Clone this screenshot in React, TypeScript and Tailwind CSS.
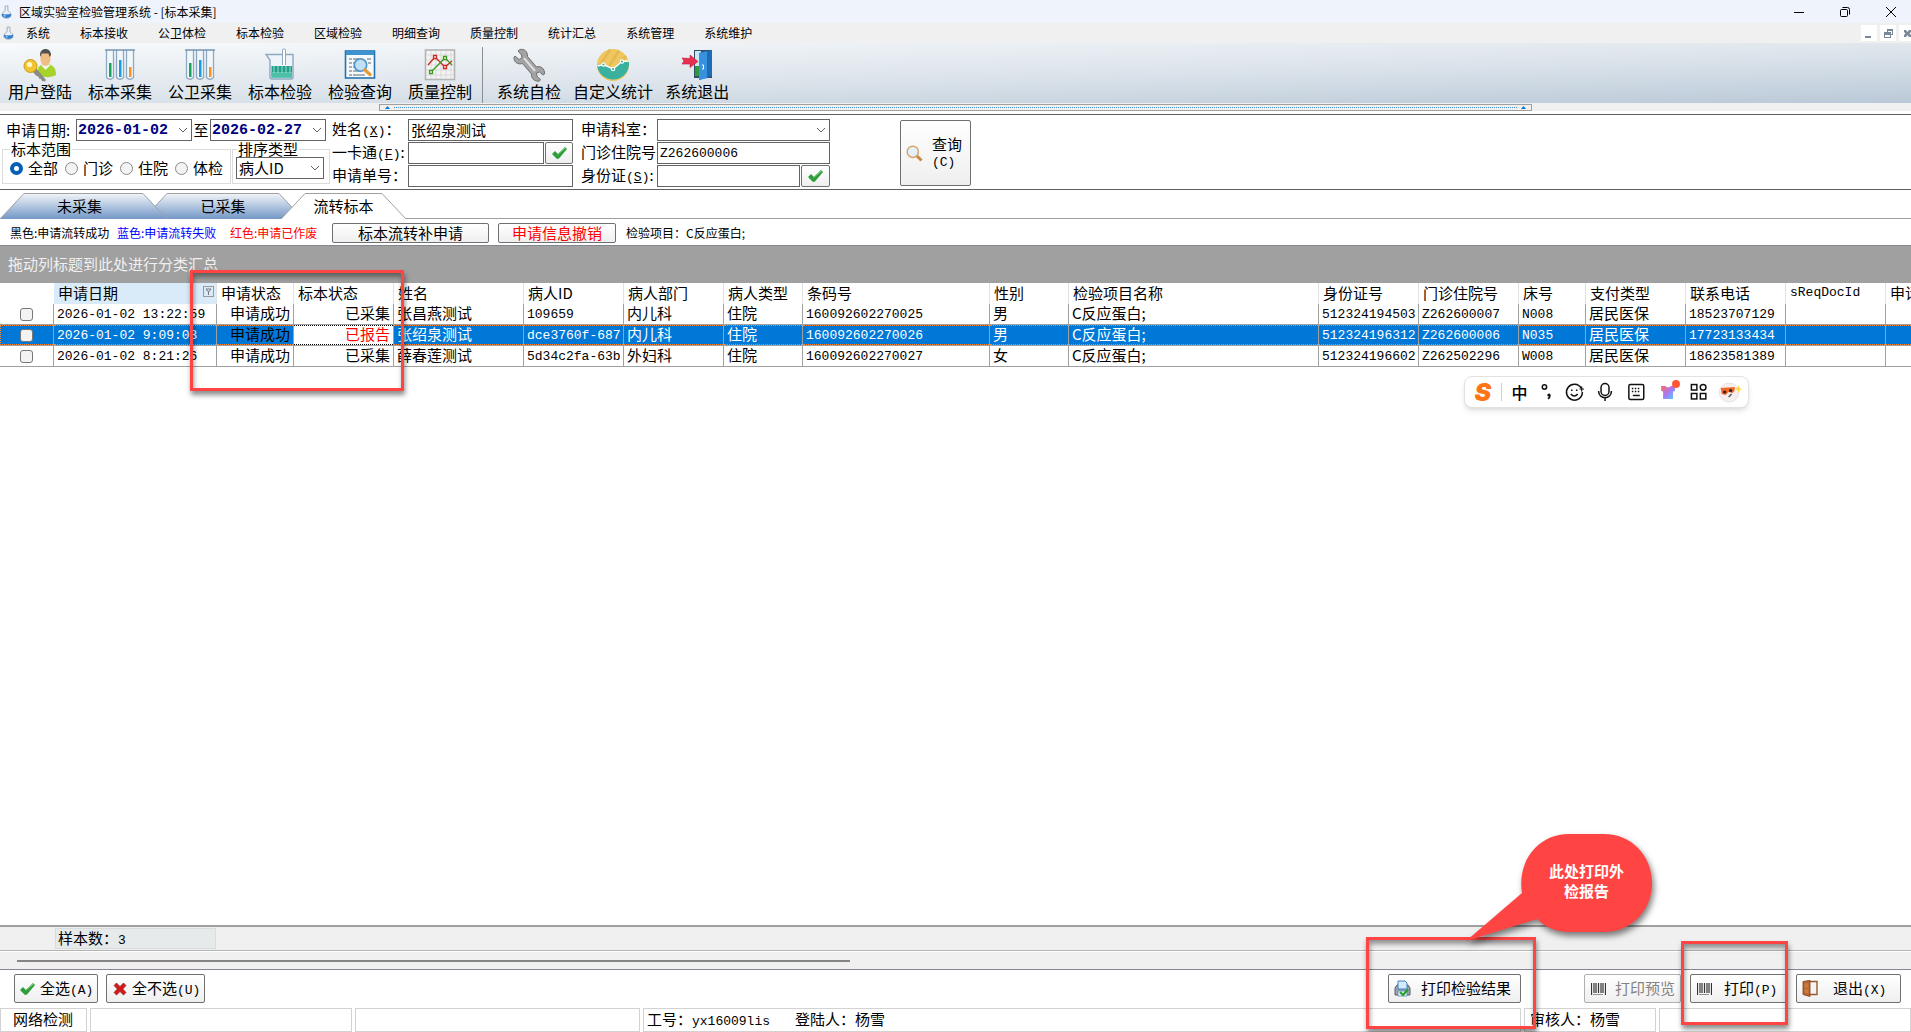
import { useState } from "react";
import type { ReactNode } from "react";
import clsx from "clsx";

type Row = {
  date: string;
  state: string;
  sample: string;
  name: string;
  pid: string;
  dept: string;
  kind: string;
  barcode: string;
  sex: string;
  item: string;
  idNo: string;
  visitNo: string;
  bed: string;
  pay: string;
  phone: string;
};

const ROWS: Row[] = [
  {
    date: "2026-01-02 13:22:59", state: "申请成功", sample: "已采集", name: "张昌燕测试", pid: "109659",
    dept: "内儿科", kind: "住院", barcode: "160092602270025", sex: "男", item: "C反应蛋白;",
    idNo: "512324194503", visitNo: "Z262600007", bed: "N008", pay: "居民医保", phone: "18523707129",
  },
  {
    date: "2026-01-02 9:09:03", state: "申请成功", sample: "已报告", name: "张绍泉测试", pid: "dce3760f-687",
    dept: "内儿科", kind: "住院", barcode: "160092602270026", sex: "男", item: "C反应蛋白;",
    idNo: "512324196312", visitNo: "Z262600006", bed: "N035", pay: "居民医保", phone: "17723133434",
  },
  {
    date: "2026-01-02 8:21:26", state: "申请成功", sample: "已采集", name: "薛春莲测试", pid: "5d34c2fa-63b",
    dept: "外妇科", kind: "住院", barcode: "160092602270027", sex: "女", item: "C反应蛋白;",
    idNo: "512324196602", visitNo: "Z262502296", bed: "W008", pay: "居民医保", phone: "18623581389",
  },
];

type Column = { title: string; width: string; field?: keyof Row; num?: boolean; right?: boolean };

const COLUMNS: Column[] = [
  { title: "申请日期", width: "w-[163px]", field: "date", num: true },
  { title: "申请状态", width: "w-[77px]", field: "state", right: true },
  { title: "标本状态", width: "w-[100px]", field: "sample", right: true },
  { title: "姓名", width: "w-[130px]", field: "name" },
  { title: "病人ID", width: "w-[100px]", field: "pid", num: true },
  { title: "病人部门", width: "w-[100px]", field: "dept" },
  { title: "病人类型", width: "w-[79px]", field: "kind" },
  { title: "条码号", width: "w-[187px]", field: "barcode", num: true },
  { title: "性别", width: "w-[79px]", field: "sex" },
  { title: "检验项目名称", width: "w-[250px]", field: "item" },
  { title: "身份证号", width: "w-[100px]", field: "idNo", num: true },
  { title: "门诊住院号", width: "w-[100px]", field: "visitNo", num: true },
  { title: "床号", width: "w-[67px]", field: "bed", num: true },
  { title: "支付类型", width: "w-[100px]", field: "pay" },
  { title: "联系电话", width: "w-[100px]", field: "phone", num: true },
  { title: "sReqDocId", width: "w-[100px]" },
  { title: "申请单号", width: "w-[100px]" },
];

const MENUS = ["系统", "标本接收", "公卫体检", "标本检验", "区域检验", "明细查询", "质量控制", "统计汇总", "系统管理", "系统维护"];

const NUM = "font-['Liberation_Mono','Noto_Sans_CJK_SC',monospace] text-[13px]";
const FIELD = "h-[22px] w-full border border-[#646464] bg-white px-[2px] outline-none";
const BUTTON = "flex items-center rounded-xs border border-[#707070] bg-linear-to-b from-white to-[#efefef]";

function FlaskIcon({ size }: { size: number }) {
  return (
    <svg width={size} height={size + 3} viewBox="0 0 12 15">
      <path d="M4.500 1h3v5C9.500 7.300 11 9 11 10.800 11 13 9 14.300 6 14.300s-5-1.300-5-3.500C1 9 2.500 7.300 4.500 6z" fill="#e9eff5" stroke="#9aa9b8" />
      <path d="M1.300 9.500c2 .8 7.400 .8 9.400 0 1 2.800-1.700 4.500-4.700 4.500s-5.700-1.700-4.700-4.500z" fill="#2f7fd0" />
      <circle cx="4" cy="11.500" r="1.200" fill="#8fc1f0" />
    </svg>
  );
}

function LoginIcon() {
  return (
    <svg width="34" height="34" viewBox="0 0 34 34">
      <path d="M14 26c0-7 3-10 9-10 7 0 10 4 10 11-5 3-14 3-19-1z" fill="#a6d42c" />
      <path d="M18 17l4.500 5 5-5-4.500-1z" fill="#f4f4ee" />
      <path d="M17.500 6c0-4 10-4 10 0v5c0 4-2.500 7-5 7s-5-3-5-7z" fill="#f0bd85" />
      <path d="M17 7c0-8 11-8 11 0l-1.500 2-1-3.500h-7L18 9z" fill="#515151" />
      <path d="M13 20l10 12-1 1.500-3-.5-1-2-2-.5-.5-2-2-.5L9 23z" fill="#8a8a86" />
      <circle cx="7.500" cy="18" r="6.500" fill="#f2c42e" stroke="#c99b17" />
      <circle cx="6.500" cy="16.500" r="2.600" fill="#fff6d0" />
    </svg>
  );
}

function TubesIcon() {
  return (
    <svg width="32" height="34" viewBox="0 0 32 34">
      {[
        { x: 3, y: 15, c: "#16a35a" },
        { x: 13, y: 12, c: "#1c9be0" },
        { x: 23, y: 19, c: "#f7941d" },
      ].map((t) => (
        <g key={t.x}>
          <path d={`M${t.x - 0.5} 2v27.500q3.500 3.500 7 0V2`} fill="#f1f6fb" stroke="#8fa9c2" strokeWidth="1.300" />
          <path d={`M${t.x - 2} 2h10`} stroke="#7d9ab6" strokeWidth="1.600" />
          <rect x={t.x + 2} y={t.y} width="2.500" height={29 - t.y} fill={t.c} />
        </g>
      ))}
    </svg>
  );
}

function BeakerIcon() {
  return (
    <svg width="32" height="34" viewBox="0 0 32 34">
      <path d="M2 6.500h27V29q0 2-2 2H8q-2 0-2-2V12z" fill="#eef4f9" stroke="#8fa9c2" strokeWidth="1.400" />
      <path d="M7.500 18H28v11.500H7.500z" fill="#1fa08a" />
      <path d="M7.500 24H28v5.500H7.500z" fill="#4cc0a8" />
      <path d="M10 18v7M14 18v7M18 18v7M22 18v7M26 18v7" stroke="#d7f0ea" strokeWidth=".7" />
      <path d="M18.500 17V1.500q1.500-1.500 3 0V17" fill="#fff" stroke="#8fa9c2" />
    </svg>
  );
}

function QueryIcon() {
  return (
    <svg width="32" height="34" viewBox="0 0 32 34">
      <rect x="1.500" y="3" width="29" height="27" fill="#f6f9fc" stroke="#2373ae" strokeWidth="1.600" />
      <rect x="2" y="3" width="28" height="4" fill="#3b93d0" />
      <path d="M5 11h3M5 15h3M5 19h3M5 23h3M5 27h3M9 11h6M23 11h4M9 15h3M9 19h3M9 23h8M9 27h12M24 15h3" stroke="#5d6873" />
      <circle cx="16.500" cy="17" r="6.200" fill="#bfe0f5" stroke="#4c93c9" strokeWidth="1.600" />
      <path d="M21 22l5 4.500" stroke="#e99a35" strokeWidth="3.400" strokeLinecap="round" />
    </svg>
  );
}

function QualityIcon() {
  return (
    <svg width="32" height="34" viewBox="0 0 32 34">
      <rect x="1.500" y="2" width="29" height="29.500" fill="#f3f3f3" stroke="#b4b4b4" strokeWidth="1.600" />
      <path d="M7 3v28M12 3v28M17 3v28M22 3v28M27 3v28M2 7h28M2 12h28M2 17h28M2 22h28M2 27h28" stroke="#d4d4d4" strokeWidth=".8" />
      <path d="M4 17l7-8 10 10 7-6" fill="none" stroke="#cc2a22" strokeWidth="1.300" />
      <path d="M7 24L21 10l7 7" fill="none" stroke="#3a9a1e" strokeWidth="1.300" />
      <g fill="#fff" strokeWidth="1.300">
        <path d="M9.500 7.500h3v3h-3zM19.500 17.500h3v3h-3z" stroke="#cc2a22" />
        <path d="M5.500 22.500h3v3h-3zM19.500 8.500h3v3h-3z" stroke="#3a9a1e" />
      </g>
    </svg>
  );
}

function WrenchIcon() {
  return (
    <svg width="34" height="34" viewBox="0 0 34 34">
      <path
        d="M8 1.500c4-1 8 2 7.500 7l9 10.500c4-1.500 8.500 1.500 8 7l-1.500 1-3.500-3-3 1 .5 3.500 3.500 3-1 1.500c-4 1-8.500-2-8-7l-9-10.500C6 17 1.500 14 2 9.500L3 8l4 3.500 3-1.500-.5-3L6 3z"
        fill="#a3a3a3"
        stroke="#6f6f6f"
      />
      <path d="M12 10l11 13" stroke="#dedede" strokeWidth="2" />
    </svg>
  );
}

function StatIcon() {
  return (
    <svg width="34" height="34" viewBox="0 0 34 34">
      <circle cx="17" cy="17" r="16" fill="#efc75e" />
      <path d="M14 1.500L3 19M23 2.500L12 20M30 8L21 18" stroke="#e4b951" strokeWidth="2.500" />
      <path d="M1 17l6.500-1L17 20.500 26 13.500l7 .5a16 16 0 0 1-32 3z" fill="#3ab09e" />
      <path d="M1.500 18L7.500 16.500 17 21l9-7.500 6.500-.5" fill="none" stroke="#fff" strokeWidth="1.400" />
      <circle cx="7.500" cy="16.500" r="1.700" fill="#3ab09e" stroke="#fff" strokeWidth="1.200" />
      <circle cx="17" cy="21" r="1.700" fill="#3ab09e" stroke="#fff" strokeWidth="1.200" />
      <circle cx="26" cy="13.500" r="1.700" fill="#3ab09e" stroke="#fff" strokeWidth="1.200" />
    </svg>
  );
}

function ExitIcon() {
  return (
    <svg width="34" height="34" viewBox="0 0 34 34">
      <path d="M14 2h18v28H14z" fill="#2f4f6b" />
      <path d="M15 3h6v25h-6z" fill="#c9e8f7" />
      <path d="M15 18h6v10h-6z" fill="#2f9a3c" />
      <path d="M19 5l13-3v26l-13 4z" fill="#1d6cb8" />
      <path d="M19 5l8-1.800v27L19 32z" fill="#3791de" />
      <path d="M22 17h1.500v4H22" fill="none" stroke="#fff" />
      <path d="M2 10l8 .5V7l8 6.500-8 6V16H2l2-3z" fill="#e5304f" stroke="#c21c3c" strokeWidth=".6" />
    </svg>
  );
}

function CheckIcon() {
  return (
    <svg width="17" height="14" viewBox="0 0 17 14" aria-hidden>
      <path d="M1 8l3-3 3 3L14 1l2 2L8 12.500 6 13z" fill="#2f9e3a" />
      <path d="M6.500 9L15 2l-1-.8L6.500 8z" fill="#7ecb85" />
    </svg>
  );
}

function CrossIcon() {
  return (
    <svg width="14" height="14" viewBox="0 0 14 14" aria-hidden>
      <path d="M3.500 1L7 4.500 10.500 1 13 3.500 9.800 7 13 10.500 10.500 13 7 9.600 3.500 13 1 10.500 4.300 7 1 3.500z" fill="#d11a1a" stroke="#8e1111" strokeWidth=".6" />
    </svg>
  );
}

function MagnifierIcon() {
  return (
    <svg width="17" height="17" viewBox="0 0 17 17" aria-hidden>
      <path d="M10.500 10.500l5 5" stroke="#c58b45" strokeWidth="3" />
      <circle cx="6.800" cy="6.800" r="5.600" fill="#e3f1fc" stroke="#d9a566" strokeWidth="1.500" />
    </svg>
  );
}

function PrinterIcon() {
  return (
    <svg width="17" height="17" viewBox="0 0 17 17" aria-hidden>
      <path d="M1 8l2-3h11l2 3v7H1z" fill="#9aa3ad" stroke="#59636e" />
      <path d="M4 1h7l2 2v6H4z" fill="#d6eafc" stroke="#3d84c6" />
      <path d="M4 11h9v5H4z" fill="#eef6fd" stroke="#5b86b0" strokeWidth=".8" />
      <path d="M6 12l3 3 5-5.500" fill="none" stroke="#23a127" strokeWidth="2.200" />
    </svg>
  );
}

function BarcodeIcon() {
  return (
    <svg width="15" height="14" viewBox="0 0 15 14" aria-hidden>
      <path d="M.500 1v12M3 1v10M5 1v10M7.500 1v10M10 1v10M12 1v10M14.500 1v12" stroke="#333" strokeWidth="1.200" />
      <path d="M2.500 12.500h10" stroke="#333" strokeDasharray="1 1" />
    </svg>
  );
}

function DoorIcon() {
  return (
    <svg width="16" height="17" viewBox="0 0 16 17" aria-hidden>
      <path d="M5 1.500h10v13H5z" fill="#f3f3f3" stroke="#9b5a2e" strokeWidth="1.400" />
      <path d="M1 1.500l7-1v16l-7-2z" fill="#b8672f" stroke="#7c4019" strokeWidth=".8" />
      <path d="M2.500 3.500l4-.5v4.500l-4 .3zM2.500 9.300l4-.2v4.400l-4-.8z" fill="#c97b40" />
    </svg>
  );
}

function Chevron() {
  return (
    <svg width="10" height="6" viewBox="0 0 10 6" className="pointer-events-none absolute right-1 top-2" aria-hidden>
      <path d="M1 1l4 4 4-4" fill="none" stroke="#606060" />
    </svg>
  );
}

const TOOLS: { label: string; icon: ReactNode }[] = [
  { label: "用户登陆", icon: <LoginIcon /> },
  { label: "标本采集", icon: <TubesIcon /> },
  { label: "公卫采集", icon: <TubesIcon /> },
  { label: "标本检验", icon: <BeakerIcon /> },
  { label: "检验查询", icon: <QueryIcon /> },
  { label: "质量控制", icon: <QualityIcon /> },
];

const SYSTEM_TOOLS: { label: string; icon: ReactNode }[] = [
  { label: "系统自检", icon: <WrenchIcon /> },
  { label: "自定义统计", icon: <StatIcon /> },
  { label: "系统退出", icon: <ExitIcon /> },
];

function TitleBar() {
  return (
    <header className="flex h-[23px] shrink-0 items-center bg-[#eff3fb] pl-px text-xs">
      <FlaskIcon size={11} />
      <h1 className="ml-[7px] flex-1">区域实验室检验管理系统 - [标本采集]</h1>
      <div className="flex items-center gap-[34px] pr-[14px]">
        <button type="button" aria-label="最小化">
          <svg width="12" height="12" viewBox="0 0 12 12"><path d="M1 6.500h10" stroke="#000" /></svg>
        </button>
        <button type="button" aria-label="还原">
          <svg width="12" height="12" viewBox="0 0 12 12" fill="none" stroke="#000">
            <rect x="1.500" y="3.500" width="7" height="7" rx="1" />
            <path d="M3.500 1.500h5q2 0 2 2v5" />
          </svg>
        </button>
        <button type="button" aria-label="关闭">
          <svg width="12" height="12" viewBox="0 0 12 12"><path d="M1 1l10 10M11 1L1 11" stroke="#000" /></svg>
        </button>
      </div>
    </header>
  );
}

const CHILD_BUTTONS = [
  { label: "最小化子窗口", d: "M4 11h6v2H4z" },
  { label: "还原子窗口", d: "M7 4h6v6h-2V9h1V6H8v1H7zM4 7h7v6H4zm1 3v2h5v-2z" },
  { label: "关闭子窗口", d: "M5 5h2l1.500 2L10 5h2v2l-1.500 1.500L12 10v2h-2l-1.500-2L7 12H5v-2l1.500-1.500L5 7z" },
];

function MenuBar() {
  return (
    <nav className="flex h-5 shrink-0 items-center overflow-hidden bg-[#f0f0f0] pl-[3px] text-xs">
      <FlaskIcon size={11} />
      <div className="ml-3 flex flex-1 gap-[30px]">
        {MENUS.map((m) => (
          <button key={m} type="button" className="leading-[18px]">
            {m}
          </button>
        ))}
      </div>
      <div className="-mr-1 flex gap-[3px]">
        {CHILD_BUTTONS.map((b) => (
          <button key={b.label} type="button" aria-label={b.label} className="bg-white">
            <svg width="16" height="16" viewBox="0 0 16 16">
              <path d={b.d} fill="#7a8797" fillRule="evenodd" />
            </svg>
          </button>
        ))}
      </div>
    </nav>
  );
}

function ToolButton({ label, icon }: { label: string; icon: ReactNode }) {
  return (
    <button type="button" className="flex flex-col items-center pt-[5px]">
      {icon}
      <span className="text-base leading-[18px]">{label}</span>
    </button>
  );
}

function ToolBar() {
  return (
    <div className="flex h-[60px] shrink-0 bg-[linear-gradient(178.5deg,#f8fafc,#dbe3ea_55%,#bac9d8)] pl-2">
      <div className="flex gap-4">
        {TOOLS.map((t) => (
          <ToolButton key={t.label} label={t.label} icon={t.icon} />
        ))}
      </div>
      <div className="ml-[10px] mt-1 border-l border-[#8a8f94]" />
      <div className="ml-[14px] flex gap-3">
        {SYSTEM_TOOLS.map((t) => (
          <ToolButton key={t.label} label={t.label} icon={t.icon} />
        ))}
      </div>
    </div>
  );
}

function Splitter() {
  return (
    <div className="h-[11px] shrink-0 bg-white">
      <div className="h-2 bg-[#f0f0f0] pt-px">
        <div className="mx-auto flex h-[7px] w-[60.3%] items-center gap-1 border border-[#a0a0a0] px-[5px]">
          <svg width="5" height="3" viewBox="0 0 5 3"><path d="M0 3l2.500-3L5 3z" fill="#0078d7" /></svg>
          <span className="flex-1 border-t border-dotted border-[#3b8fd0]" />
          <svg width="5" height="3" viewBox="0 0 5 3"><path d="M0 3l2.500-3L5 3z" fill="#0078d7" /></svg>
        </div>
      </div>
    </div>
  );
}

function DateField({ id, value, label }: { id: string; value: string; label: string }) {
  const [v, setV] = useState(value);
  return (
    <div className="relative">
      <input
        id={id}
        aria-label={label}
        value={v}
        onChange={(e) => setV(e.target.value)}
        className="block h-[22px] w-[116px] border border-[#646464] bg-white px-px font-['Liberation_Mono',monospace] text-[15px] font-bold text-[#000080] outline-none"
      />
      <Chevron />
    </div>
  );
}

function Hot({ k }: { k: string }) {
  return (
    <span className={NUM}>
      (<u>{k}</u>)
    </span>
  );
}

function FilterPanel() {
  const [scope, setScope] = useState("全部");
  return (
    <form
      onSubmit={(e) => e.preventDefault()}
      className="flex h-[76px] shrink-0 border-y border-[#606060] bg-white pt-1 leading-5"
    >
      <div className="flex w-[330px] shrink-0 flex-col">
        <div className="flex items-center pl-1.5">
          <label htmlFor="from" className="w-[70px] whitespace-nowrap">申请日期:</label>
          <DateField id="from" label="开始日期" value="2026-01-02" />
          <label htmlFor="to" className="w-[18px] text-center">至</label>
          <DateField id="to" label="结束日期" value="2026-02-27" />
        </div>
        <div className="flex gap-px pl-[2px]">
          <fieldset className="h-[43px] w-[226px] border border-[#dcdcdc] pl-[7px]">
            <legend className="px-px leading-4">标本范围</legend>
            <div className="flex">
              {["全部", "门诊", "住院", "体检"].map((s) => (
                <label key={s} className="flex w-[55px] items-center gap-[5px] whitespace-nowrap leading-[22px]">
                  <input
                    type="radio"
                    name="scope"
                    checked={scope === s}
                    onChange={() => setScope(s)}
                    className="size-[13px] shrink-0 appearance-none rounded-full border border-[#8a8a8a] bg-[#f3f3f3] checked:border-4 checked:border-[#0560b6] checked:bg-white"
                  />
                  {s}
                </label>
              ))}
            </div>
          </fieldset>
          <fieldset className="h-[43px] w-[98px] border border-[#dcdcdc] pl-[3px]">
            <legend className="ml-px px-px leading-4">排序类型</legend>
            <div className="relative w-[88px]">
              <select aria-label="排序类型" className="block h-[22px] w-full appearance-none border border-[#646464] bg-white pl-[2px] leading-[18px] outline-none">
                <option>病人ID</option>
              </select>
              <Chevron />
            </div>
          </fieldset>
        </div>
      </div>

      <div className="grid shrink-0 auto-rows-[22px] grid-cols-[76px_165px] content-start gap-y-px whitespace-nowrap pl-[2px]">
        <label htmlFor="pname">姓名<Hot k="X" />：</label>
        <input id="pname" defaultValue="张绍泉测试" className={clsx(FIELD, "pb-[2px]")} />
        <label htmlFor="card">一卡通<Hot k="F" />:</label>
        <div className="flex gap-px">
          <input id="card" className={FIELD} />
          <button type="button" aria-label="读取一卡通" className={clsx(BUTTON, "w-7 shrink-0 justify-center")}>
            <CheckIcon />
          </button>
        </div>
        <label htmlFor="reqno">申请单号：</label>
        <input id="reqno" className={FIELD} />
      </div>

      <div className="grid shrink-0 auto-rows-[22px] grid-cols-[76px_173px] content-start gap-y-px whitespace-nowrap pl-2">
        <label htmlFor="dept">申请科室：</label>
        <div className="relative">
          <select id="dept" className={clsx(FIELD, "block appearance-none")} />
          <Chevron />
        </div>
        <label htmlFor="visit">门诊住院号</label>
        <input id="visit" defaultValue="Z262600006" className={clsx(FIELD, NUM)} />
        <label htmlFor="idno">身份证<Hot k="S" />:</label>
        <div className="flex gap-px">
          <input id="idno" className={FIELD} />
          <button type="button" aria-label="读取身份证" className={clsx(BUTTON, "w-[29px] shrink-0 justify-center")}>
            <CheckIcon />
          </button>
        </div>
      </div>

      <button type="submit" className={clsx(BUTTON, "ml-[70px] mt-px h-[66px] w-[71px] shrink-0 gap-[9px] pl-[5px] leading-4")}>
        <MagnifierIcon />
        <span className="text-left">
          查询
          <br />
          <span className={NUM}>(C)</span>
        </span>
      </button>
    </form>
  );
}

function Tabs() {
  const [active, setActive] = useState("流转标本");
  const tabs = [
    { name: "未采集", cls: "w-[167px] z-10 pr-2", w: 167 },
    { name: "已采集", cls: "w-[160px] -ml-6", w: 160 },
    { name: "流转标本", cls: "w-[125px] -ml-[22px] z-20", w: 125 },
  ];
  return (
    <div role="tablist" className="flex h-[29px] shrink-0 border-b border-[#a0a0a0] bg-white pt-[3px]">
      {tabs.map((t) => {
        const on = t.name === active;
        return (
          <button
            key={t.name}
            type="button"
            role="tab"
            aria-selected={on}
            onClick={() => setActive(t.name)}
            className={clsx("relative h-[26px] leading-[26px]", t.cls)}
          >
            <svg className="absolute inset-0" width={t.w} height="26" viewBox={`0 0 ${t.w} 26`} aria-hidden>
              <defs>
                <linearGradient id="tabFill" x1="0" y1="0" x2="0" y2="1">
                  <stop offset="0" stopColor="#f1f5f9" />
                  <stop offset="1" stopColor="#7397c6" />
                </linearGradient>
              </defs>
              <path
                d={`M0 26L24 .500H${t.w - 24}L${t.w} 26`}
                fill={on ? "#fff" : "url(#tabFill)"}
                stroke="#a0a0a0"
              />
            </svg>
            <span className="relative">{t.name}</span>
          </button>
        );
      })}
    </div>
  );
}

function LegendBar() {
  return (
    <div className="flex h-[26px] shrink-0 items-center bg-white pl-[10px] pt-px text-xs">
      <span className="w-[107px] whitespace-nowrap">黑色:申请流转成功</span>
      <span className="w-[113px] whitespace-nowrap text-[#0000ff]">蓝色:申请流转失败</span>
      <span className="w-[102px] whitespace-nowrap text-[#ff0000]">红色:申请已作废</span>
      <button type="button" className={clsx(BUTTON, "h-5 w-[157px] justify-center text-[15px] leading-4")}>标本流转补申请</button>
      <button type="button" className={clsx(BUTTON, "ml-[9px] h-5 w-[118px] justify-center text-[15px] leading-4 text-[#ff0000]")}>申请信息撤销</button>
      <span className="ml-[10px]">检验项目：C反应蛋白;</span>
    </div>
  );
}

function SampleGrid() {
  const [picked, setPicked] = useState<string[]>([]);
  const [current, setCurrent] = useState(ROWS[1].barcode);

  function toggle(code: string) {
    setPicked((p) => (p.includes(code) ? p.filter((x) => x !== code) : [...p, code]));
  }

  return (
    <div className="relative min-h-0 flex-1 overflow-hidden bg-white">
      <p className="h-[38px] border-t border-[#828790] bg-[#a0a0a0] pl-2 leading-9 text-[#f0f0f0]">
        拖动列标题到此处进行分类汇总
      </p>
      <table className="w-[1986px] table-fixed border-separate border-spacing-0 whitespace-nowrap text-left">
        <thead>
          <tr className="h-[21px]">
            <th className="w-[54px]" aria-label="选择" />
            {COLUMNS.map((c, i) => (
              <th
                key={c.title}
                className={clsx(
                  "relative border-r border-[#e2e2e2] pb-[2px] pl-1 font-normal leading-[19px]",
                  c.width,
                  i === 0 && "bg-[#d9ebf9]",
                  c.title === "sReqDocId" && NUM,
                )}
              >
                {c.title}
                {i === 0 && (
                  <svg width="11" height="11" viewBox="0 0 11 11" className="absolute right-[2px] top-[3px]" aria-hidden>
                    <rect x=".5" y=".5" width="10" height="10" fill="none" stroke="#9a9a9a" />
                    <path d="M3 3h5L5.500 6zM5.500 5v4" fill="none" stroke="#777" />
                  </svg>
                )}
              </th>
            ))}
          </tr>
        </thead>
        <tbody>
          {ROWS.map((r) => {
            const on = r.barcode === current;
            return (
              <tr key={r.barcode} onClick={() => setCurrent(r.barcode)} className={clsx("h-[21px]", on && "bg-[#0078d7] text-white")}>
                <td className="relative border-b border-r border-[#a0a0a0] p-0">
                  <input
                    type="checkbox"
                    aria-label={`选择 ${r.name}`}
                    checked={picked.includes(r.barcode)}
                    onChange={() => toggle(r.barcode)}
                    className="mx-auto block size-[13px] appearance-none rounded-[3px] border border-[#777] bg-[#f3f3f3] checked:bg-[#0560b6]"
                  />
                  {on && <span className="pointer-events-none absolute inset-0 border-y border-l border-dotted border-[#ff8728]" />}
                </td>
                {COLUMNS.map((c) => (
                  <td
                    key={c.title}
                    className={clsx(
                      "relative overflow-hidden border-b border-r border-[#a0a0a0] px-[3px] leading-[18px]",
                      c.num ? "pb-0 pt-[2px]" : "pb-[2px] pt-0",
                      c.num && NUM,
                      c.right && "text-right",
                      on && c.field === "state" && "text-black",
                      on && c.field === "sample" && "bg-white text-[#ff0000]",
                    )}
                  >
                    {c.field ? r[c.field] : ""}
                    {on && (
                      <span
                        className={clsx(
                          "absolute inset-0 border-y border-dotted",
                          c.field === "sample" ? "border-black" : "border-[#ff8728]",
                        )}
                      />
                    )}
                  </td>
                ))}
              </tr>
            );
          })}
        </tbody>
      </table>

      <div className="pointer-events-none absolute left-[190px] top-[25px] h-[121px] w-[214px] border-[3px] border-[#ff4444] shadow-[1px_4px_5px_rgba(0,0,0,0.45),inset_1px_4px_5px_rgba(0,0,0,0.4)]" />
    </div>
  );
}

function ImeBar() {
  return (
    <div className="absolute right-[162px] top-[376px] flex h-8 w-[285px] items-center rounded-lg border border-[#e2e2e2] bg-white shadow-md">
      <span className="w-9 text-center font-['Inter',sans-serif] text-[25px] leading-8 font-black text-[#ff7416] italic">S</span>
      <span className="h-[18px] border-l border-[#cfcfcf]" />
      <span className="w-9 text-center text-base leading-7 font-medium">中</span>
      <svg width="212" height="24" viewBox="0 0 212 24" fill="none" stroke="#111" strokeWidth="1.500" aria-hidden>
        <circle cx="6.500" cy="7" r="2.200" />
        <circle cx="11" cy="15" r="1.600" fill="#111" stroke="none" />
        <path d="M12 15q.3 2.500-2 4" />
        <path d="M43.500 8a8 8 0 1 0 1.200 4" />
        <path d="M33 14q3.500 4 7 0M34 9.500v1.500M39 9.500v1.500" />
        <path d="M44 6.500v5M41.800 9h4.600" strokeWidth="1.200" />
        <rect x="63.500" y="3.500" width="8" height="12" rx="4" />
        <path d="M61 11c0 9 13 9 13 0M67.500 18v3" />
        <rect x="91.500" y="4.500" width="15" height="15" rx="1.500" />
        <path d="M94.500 8.500h9M94.500 11.500h9" strokeDasharray="1.500 1.500" />
        <path d="M95.500 15.500h7" />
        <g stroke="none">
          <defs>
            <linearGradient id="shirt" x1="0" y1="0" x2="1" y2="1">
              <stop offset="0" stopColor="#ff6a5a" />
              <stop offset=".5" stopColor="#a878f5" />
              <stop offset="1" stopColor="#4fd2ff" />
            </linearGradient>
          </defs>
          <path d="M124 6h4q3 3 6 0h4v5l-2 .5V19h-10v-7.500l-2-.5z" fill="url(#shirt)" />
          <circle cx="139" cy="4" r="4" fill="#ff5533" />
        </g>
        <rect x="154.500" y="4.500" width="5.500" height="5.500" />
        <circle cx="166.300" cy="7.300" r="2.900" />
        <rect x="154.500" y="13.500" width="5.500" height="5.500" />
        <rect x="163.500" y="13.500" width="5.500" height="5.500" />
        <g stroke="none">
          <ellipse cx="192.500" cy="12.500" rx="10" ry="9.500" fill="#f5efef" stroke="#e7dcdc" strokeWidth=".8" />
          <path d="M184 8l14-1q1 4-2 6l-4-1-3 3-4-1z" fill="#f2682a" />
          <circle cx="188" cy="12" r="1.600" fill="#222" />
          <circle cx="194" cy="10.500" r="1.600" fill="#222" />
          <path d="M192 17l3-3" stroke="#555" />
          <path d="M202 5l1 3 2.500 1-2.500 1-1 3-1-3-2.500-1 2.500-1z" fill="#ffd53d" />
        </g>
      </svg>
    </div>
  );
}

function BottomBars() {
  return (
    <footer className="shrink-0">
      <div className="h-[26px] border-t-2 border-b border-t-[#a0a0a0] border-b-[#b4b4b4] bg-[#f0f0f0] pl-[55px] pt-px">
        <div className="h-[21px] w-[161px] border border-[#d8dcdc] bg-[#e6eaea] pl-[2px] leading-[18px]">
          样本数：<span className={NUM}>3</span>
        </div>
      </div>
      <div className="flex h-[18px] items-center border-t border-white bg-[#f0f0f0] pl-[17px]">
        <div className="h-[2px] w-[44%] bg-[#858585]" />
      </div>
      <div className="flex h-[39px] items-start border-t border-[#828790] bg-white pl-[14px] pr-[10px] pt-1 whitespace-nowrap">
        <button type="button" className={clsx(BUTTON, "h-[29px] w-[84px] gap-1 pl-1")}>
          <CheckIcon />
          <span>全选<span className={NUM}>(A)</span></span>
        </button>
        <button type="button" className={clsx(BUTTON, "ml-2 h-[29px] w-[99px] gap-[5px] pl-[6px]")}>
          <CrossIcon />
          <span>全不选<span className={NUM}>(U)</span></span>
        </button>
        <button type="button" className={clsx(BUTTON, "ml-auto h-[29px] w-[133px] gap-[10px] pl-[5px]")}>
          <PrinterIcon />
          打印检验结果
        </button>
        <button type="button" disabled className={clsx(BUTTON, "ml-[63px] h-[29px] w-[97px] gap-[9px] border-[#b0b0b0] pl-[6px] text-[#838383]")}>
          <BarcodeIcon />
          打印预览
        </button>
        <button type="button" className={clsx(BUTTON, "ml-[9px] h-[29px] w-[98px] gap-3 pl-[6px]")}>
          <BarcodeIcon />
          <span>打印<span className={NUM}>(P)</span></span>
        </button>
        <button type="button" className={clsx(BUTTON, "ml-2 h-[29px] w-[105px] gap-[15px] pl-[5px]")}>
          <DoorIcon />
          <span>退出<span className={NUM}>(X)</span></span>
        </button>
      </div>
      <div className="flex h-6 gap-[3px] bg-white leading-5 *:border *:border-[#d2d2d2]">
        <span className="w-[87px] pl-3">网络检测</span>
        <span className="w-[262px]" />
        <span className="w-[285px]" />
        <span className="flex-1 pl-[3px]">
          工号：<span className={NUM}>yx16009lis</span>
          <span className="ml-[25px]">登陆人：杨雪</span>
        </span>
        <span className="w-[132px] pl-[5px]">审核人：杨雪</span>
        <span className="w-[252px]" />
      </div>
    </footer>
  );
}

function Callouts() {
  const frame = "border-[3px] border-[#ff4444] shadow-[1px_4px_5px_rgba(0,0,0,0.45),inset_1px_4px_5px_rgba(0,0,0,0.4)]";
  return (
    <div className="pointer-events-none">
      <div className={clsx("absolute bottom-[3px] right-[375px] h-[92px] w-[170px]", frame)} />
      <div className={clsx("absolute bottom-[7px] right-[123px] h-[84px] w-[107px]", frame)} />
      <div className="absolute bottom-[89px] right-[257px] h-[110px] w-[190px]">
        <svg width="190" height="110" viewBox="0 0 190 110" className="absolute inset-0 overflow-visible drop-shadow-[2px_4px_3px_rgba(0,0,0,0.5)]" aria-hidden>
          <path
            d="M105 1h35c27 0 48 21 48 49s-21 49-48 49h-35c-13 0-24-5-32-13L2 108 58 60c-5-32 16-59 47-59z"
            fill="#ff4444"
          />
        </svg>
        <p className="relative ml-[55px] pt-7 text-center leading-5 font-bold text-white">
          此处打印外
          <br />
          检报告
        </p>
      </div>
    </div>
  );
}

export default function App() {
  return (
    <div className="relative flex h-screen flex-col overflow-hidden bg-white font-['Noto_Sans_CJK_SC',sans-serif] text-[15px] text-black">
      <TitleBar />
      <MenuBar />
      <ToolBar />
      <Splitter />
      <FilterPanel />
      <Tabs />
      <LegendBar />
      <SampleGrid />
      <BottomBars />
      <ImeBar />
      <Callouts />
    </div>
  );
}
